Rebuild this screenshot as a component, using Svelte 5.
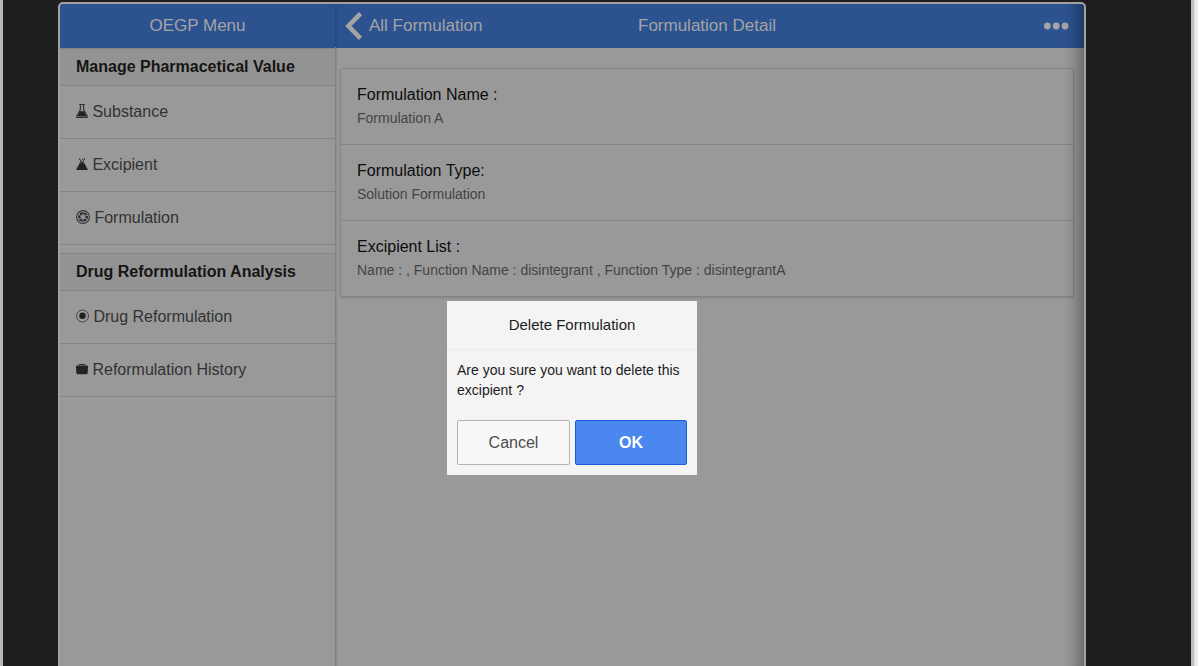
<script>
  const groups = [
    {
      title: 'Manage Pharmacetical Value',
      items: [
        { icon: 'flask', label: 'Substance', width: 12 },
        { icon: 'mix', label: 'Excipient', width: 12 },
        { icon: 'aperture', label: 'Formulation', width: 14 }
      ]
    },
    {
      title: 'Drug Reformulation Analysis',
      items: [
        { icon: 'radio', label: 'Drug Reformulation', width: 13 },
        { icon: 'case', label: 'Reformulation History', width: 12 }
      ]
    }
  ];
  const details = [
    { label: 'Formulation Name :', value: 'Formulation A' },
    { label: 'Formulation Type:', value: 'Solution Formulation' },
    { label: 'Excipient List :', value: 'Name : , Function Name : disintegrant , Function Type : disintegrantA' }
  ];
  const blades = [0, 60, 120, 180, 240, 300];
</script>

<div class="stage">
  <div class="device">
    <div class="screen">
      <aside>
        <header class="bar"><h1>OEGP Menu</h1></header>
        {#each groups as group}
          <section>
            <h2>{group.title}</h2>
            {#each group.items as item}
              <div class="item">
                <svg width={item.width} height="14" viewBox="0 0 {item.width} 14">
                  {#if item.icon === 'flask'}
                    <path d="M3.2 .5h5.600M4.400 .5v5L.7 12.200q-.4 1.300.8 1.300h9q1.200 0 .8-1.300L7.600 5.500v-5" fill="none" stroke="#303030" stroke-width="1.100" />
                    <path d="M4 7.200h4l2.600 5.200H1.400z" fill="#202020" />
                  {:else if item.icon === 'mix'}
                    <path d="M4 5.500 0 13h12L8 5.500z" fill="#222" />
                    <path d="M3.500 1v2M8.500 1v2M4.500 2.500v4M7.500 2.500v4" stroke="#484848" fill="none" />
                    <path d="M6.500 1.500v1.500M5.500 3.500v2M6.500 4.500v2" stroke="#404040" stroke-width="1" />
                  {:else if item.icon === 'aperture'}
                    <circle cx="7" cy="7" r="6.400" fill="none" stroke="#303030" stroke-width="1.100" />
                    <circle cx="7" cy="7" r="5" fill="#282828" />
                    <circle cx="7" cy="7" r="1.900" fill="#999" />
                    {#each blades as angle}
                      <path d="M5.200 6.200 8 2" transform="rotate({angle} 7 7)" stroke="#999" stroke-width=".8" />
                    {/each}
                    <circle cx="7" cy="7" r="5.400" fill="none" stroke="#8a8a8a" stroke-width=".6" />
                  {:else if item.icon === 'radio'}
                    <circle cx="6.500" cy="7" r="6" fill="none" stroke="#3c3c3c" stroke-width=".9" />
                    <circle cx="6.500" cy="6.800" r="3.200" fill="#202020" />
                  {:else}
                    <path d="M2 3 3.200 2h5.600L10 3z" fill="#2b2b2b" />
                    <path d="M1 3.400h10q1 0 1 1l-.4 6.600q-.1 1.200-1.200 1.200H1.600Q.5 12.200 .4 11L0 4.400q0-1 1-1z" fill="#222" />
                  {/if}
                </svg>
                <span>{item.label}</span>
              </div>
            {/each}
          </section>
        {/each}
      </aside>
      <main>
        <header class="bar main-bar">
          <div class="back">
            <svg width="18" height="28" viewBox="0 0 18 28"><path d="M15.500 1.600 3.400 14l12.100 12.400" fill="none" stroke="#a4a4a4" stroke-width="4.600" /></svg>
            <span>All Formulation</span>
          </div>
          <h1>Formulation Detail</h1>
          <svg class="more" width="26" height="8" viewBox="0 0 26 8" fill="#a4a4a4">
            <circle cx="3.300" cy="4" r="3.400" /><circle cx="12.200" cy="4" r="3.400" /><circle cx="21.100" cy="4" r="3.400" />
          </svg>
        </header>
        <div class="card">
          {#each details as row}
            <div class="row">
              <h3>{row.label}</h3>
              <p>{row.value}</p>
            </div>
          {/each}
        </div>
      </main>
      <div class="edge"></div>
    </div>
  </div>
  <div class="rail"></div>

  <div class="popup">
    <h4>Delete Formulation</h4>
    <p>Are you sure you want to delete this excipient ?</p>
    <div class="buttons">
      <button>Cancel</button>
      <button class="ok">OK</button>
    </div>
  </div>
</div>

<style>
  :global(body) { margin: 0; overflow: hidden; }
  .stage {
    position: relative;
    display: flex;
    width: 1199px;
    height: 666px;
    box-sizing: border-box;
    border-left: 3px solid #b9b9b9;
    overflow: hidden;
    font-family: "Liberation Sans", Arial, sans-serif;
    background: #1e1e1e;
  }
  .device { flex: 1; padding: 2px 0 0 55px; }
  .rail { width: 5px; border-left: 3px solid #bebebe; background: linear-gradient(90deg, #dedede, #fafafa); }
  .screen {
    position: relative;
    display: flex;
    width: 1024px;
    height: 680px;
    border: 2px solid #a2a2a2;
    border-radius: 5px;
    background: #999;
    overflow: hidden;
  }
  aside {
    width: 275px;
    border-right: 1px solid;
    border-image: linear-gradient(#264a84 44px, #828282 44px) 1;
    box-shadow: 1px 0 1px rgba(0, 0, 0, .08);
    z-index: 1;
  }
  main { flex: 1; }
  h1, h2, h3, h4, p { margin: 0; font-weight: 400; }
  .bar {
    display: flex;
    align-items: center;
    justify-content: center;
    height: 44px;
    background: #2c5290;
    color: #a4a4a4;
    font-size: 17px;
  }
  .bar h1 { font-size: 17px; line-height: 44px; padding-bottom: 1px; box-sizing: border-box; height: 44px; }
  .main-bar { display: grid; grid-template-columns: 302px auto 1fr; }
  .back { display: flex; align-items: center; gap: 6px; padding-left: 9px; }
  .more { justify-self: end; margin-right: 14px; }
  section + section { margin-top: 8px; }
  h2 {
    height: 36px;
    padding-left: 16px;
    border-top: 1px solid #848484;
    border-bottom: 1px solid #848484;
    background: #939393;
    color: #151515;
    font-size: 16px;
    font-weight: 700;
    line-height: 35px;
  }
  .item {
    display: flex;
    align-items: center;
    gap: 4.45px;
    height: 52px;
    padding-left: 16px;
    border-bottom: 1px solid #848484;
    color: #323232;
    font-size: 16px;
  }
  .item svg { flex: none; margin-top: -2px; }
  .item span { margin-top: -1px; }
  .card {
    margin: 20px 10px 0 4px;
    border: 1px solid #848484;
    border-radius: 2px;
    box-shadow: 0 1px 2px rgba(0, 0, 0, .15);
  }
  .row { height: 75px; box-sizing: border-box; padding: 16px 16px 0; }
  .row + .row { border-top: 1px solid #848484; height: 76px; }
  h3 { color: #0c0c0c; font-size: 16px; line-height: 19px; }
  .row p { margin-top: 4px; color: #444; font-size: 14px; line-height: 20px; }
  .edge {
    position: absolute;
    inset: 0 0 0 auto;
    width: 20px;
    background: linear-gradient(90deg, transparent, rgba(0, 0, 0, .06) 35%, rgba(0, 0, 0, .28));
  }
  .popup {
    position: absolute;
    left: 444px;
    top: 301px;
    width: 250px;
    height: 174px;
    background: #f4f4f4;
    color: #1c1c1c;
  }
  h4 { height: 48px; border-bottom: 1px solid #ebebeb; font-size: 15px; line-height: 48px; text-align: center; }
  .popup p { height: 50px; padding: 10px 10px 0; font-size: 14px; line-height: 20px; }
  .buttons { display: grid; grid-template-columns: 113px 112px; gap: 5px; padding: 10px 10px 0; }
  button {
    height: 45px;
    padding: 0;
    border: 1px solid #b2b2b2;
    border-radius: 2px;
    background: #f8f8f8;
    color: #4c4c4c;
    font: 16px "Liberation Sans", Arial, sans-serif;
  }
  .ok { border-color: #145fd7; background: #4a87ee; color: #fff; font-weight: 700; }
</style>
